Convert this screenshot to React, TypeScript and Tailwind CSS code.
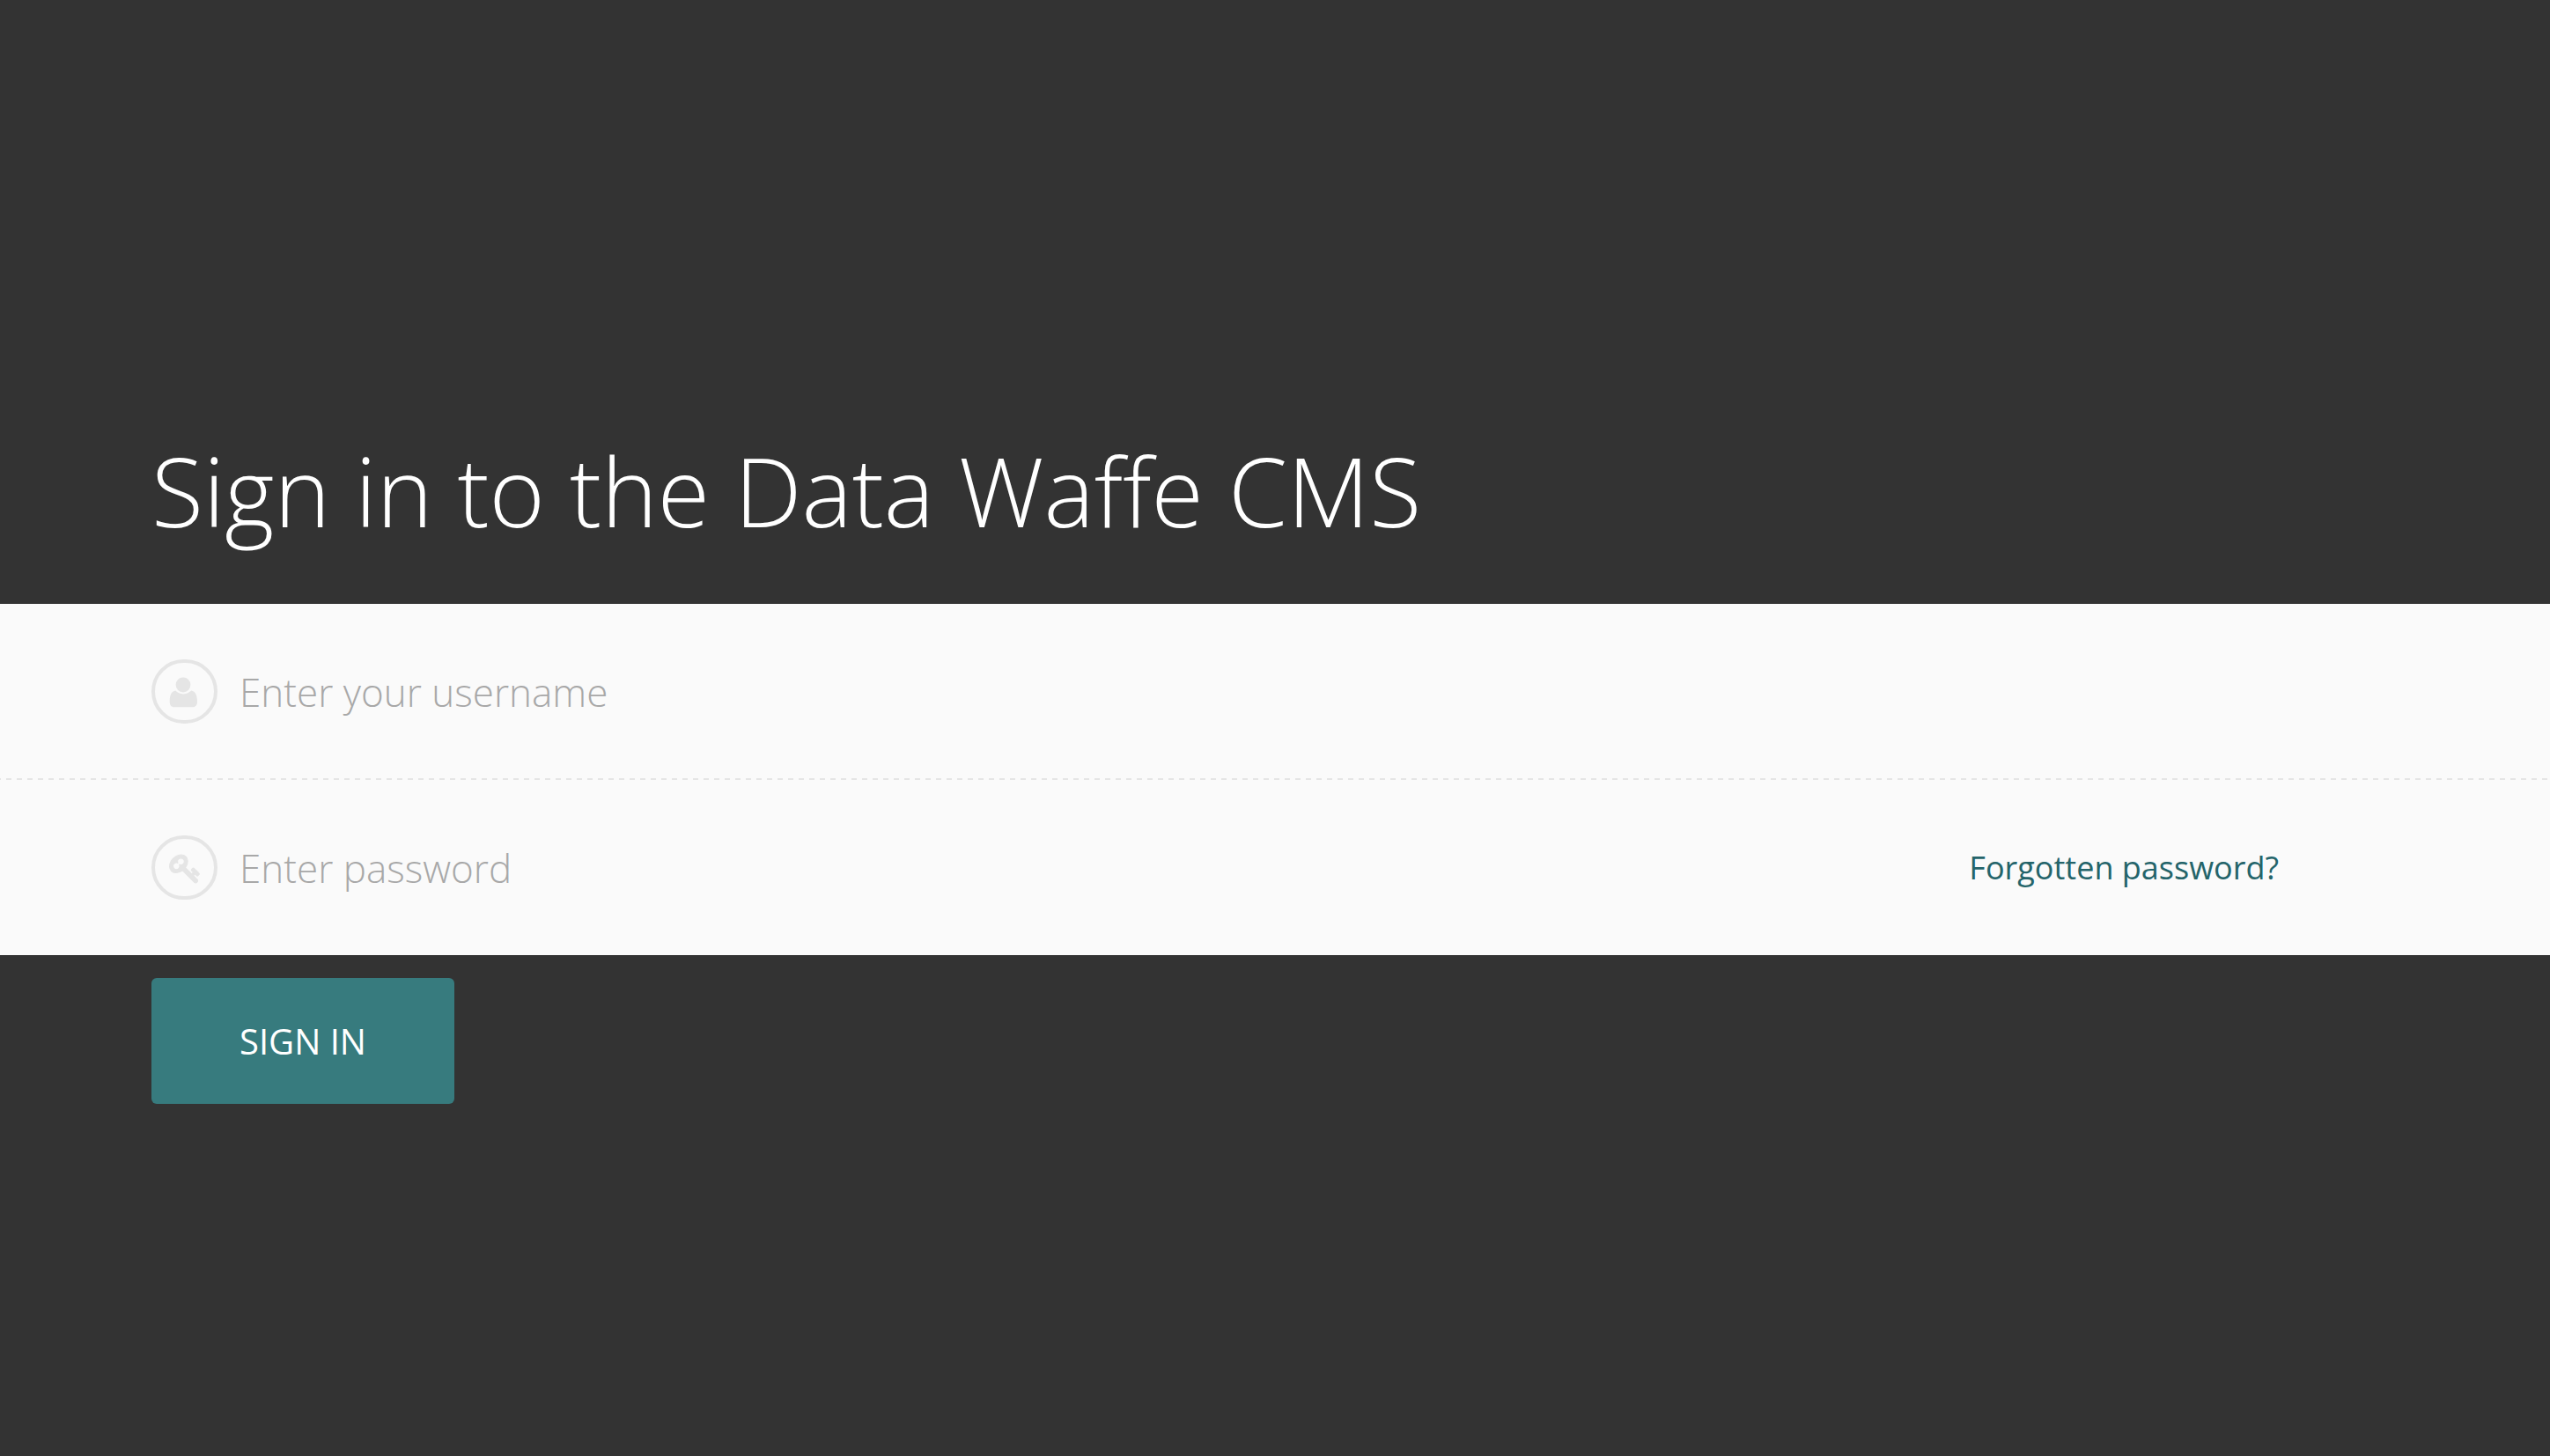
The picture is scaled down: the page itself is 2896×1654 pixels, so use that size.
import type { ReactNode } from "react";

function UserIcon() {
  return (
    <svg viewBox="2 0 40 42" className="h-[42px] w-[40px] fill-[#e5e5e5]" aria-hidden="true">
      <circle cx="20" cy="13" r="8.4" />
      <path d="M11.2 19.6C13.4 22 16.5 23.4 20.2 23.4S27 22 29.2 19.6C33.8 20.2 36 24.6 36 32.2C36 36 34.2 38.2 31 38.2H9.7C6.5 38.2 4.7 36 4.7 32.2C4.7 24.6 6.8 20.2 11.2 19.6Z" />
    </svg>
  );
}

function KeyIcon() {
  return (
    <svg
      viewBox="-30 -20 1792 1792"
      className="size-[36px] fill-[#e5e5e5] stroke-[#e5e5e5]"
      strokeWidth="56"
      strokeLinejoin="round"
      aria-hidden="true"
    >
      <path d="M832 512q0-80-56-136t-136-56-136 56-56 136q0 42 19 83-41-19-83-19-80 0-136 56t-56 136 56 136 136 56 136-56 56-136q0-42-19-83 41 19 83 19 80 0 136-56t56-136zm851 704q0 17-49 66t-66 49q-9 0-28.5-16t-36.5-33-38.5-40-24.5-26l-96 96 220 220q28 28 28 68 0 42-39 81t-81 39q-40 0-68-28l-671-671q-176 131-365 131-163 0-265.5-102.5t-102.5-265.5q0-160 95-313t248-248 313-95q163 0 265.5 102.5t102.5 265.5q0 189-131 365l355 355 96-96q-3-3-26-24.5t-40-38.5-33-36.5-16-28.5q0-17 49-66t66-49q13 0 23 10 6 6 46 44.5t82 79.5 86.5 86 73 78 28.5 41z" />
    </svg>
  );
}

type FieldProps = {
  id: string;
  type: string;
  label: string;
  placeholder: string;
  icon: ReactNode;
  children?: ReactNode;
};

function Field({ id, type, label, placeholder, icon, children }: FieldProps) {
  return (
    <div className="flex items-center px-[172px] py-[63px]">
      <label
        htmlFor={id}
        className="flex h-[73px] w-[75px] shrink-0 items-center justify-center rounded-full border-4 border-[#e5e5e5]"
      >
        {icon}
      </label>
      <input
        id={id}
        name={id}
        type={type}
        aria-label={label}
        placeholder={placeholder}
        className="ml-[25px] min-w-0 flex-1 bg-transparent text-[44px] leading-[60px] font-light text-[#333333] outline-none placeholder:text-[#a8a8a8]"
      />
      {children}
    </div>
  );
}

export default function App() {
  return (
    <main className="flex min-h-screen flex-col justify-center bg-[#333333] font-['Open_Sans',sans-serif]">
      <form onSubmit={(e) => e.preventDefault()}>
        <h1 className="px-[172px] pt-[79px] pb-[49px] text-[108px] leading-[158px] font-light text-white">
          Sign in to the Data Waffe CMS
        </h1>
        <div className="bg-[#fafafa]">
          <Field
            id="username"
            type="text"
            label="Username"
            placeholder="Enter your username"
            icon={<UserIcon />}
          />
          <div className="-mt-px h-[2px] bg-[repeating-linear-gradient(90deg,#e5e5e5_0px,#e5e5e5_1px,transparent_1px,transparent_7px,#e5e5e5_7px,#e5e5e5_12px)]" />
          <Field
            id="password"
            type="password"
            label="Password"
            placeholder="Enter password"
            icon={<KeyIcon />}
          >
            <a href="#" className="mr-[136px] text-[36px] leading-[48px] text-[#24646a]">
              Forgotten password?
            </a>
          </Field>
        </div>
        <div className="px-[172px] pt-[26px]">
          <button
            type="submit"
            className="rounded-[6px] bg-[#377b7e] px-[100px] py-[42px] text-[40px] leading-[59px] text-white"
          >
            SIGN IN
          </button>
        </div>
      </form>
    </main>
  );
}
